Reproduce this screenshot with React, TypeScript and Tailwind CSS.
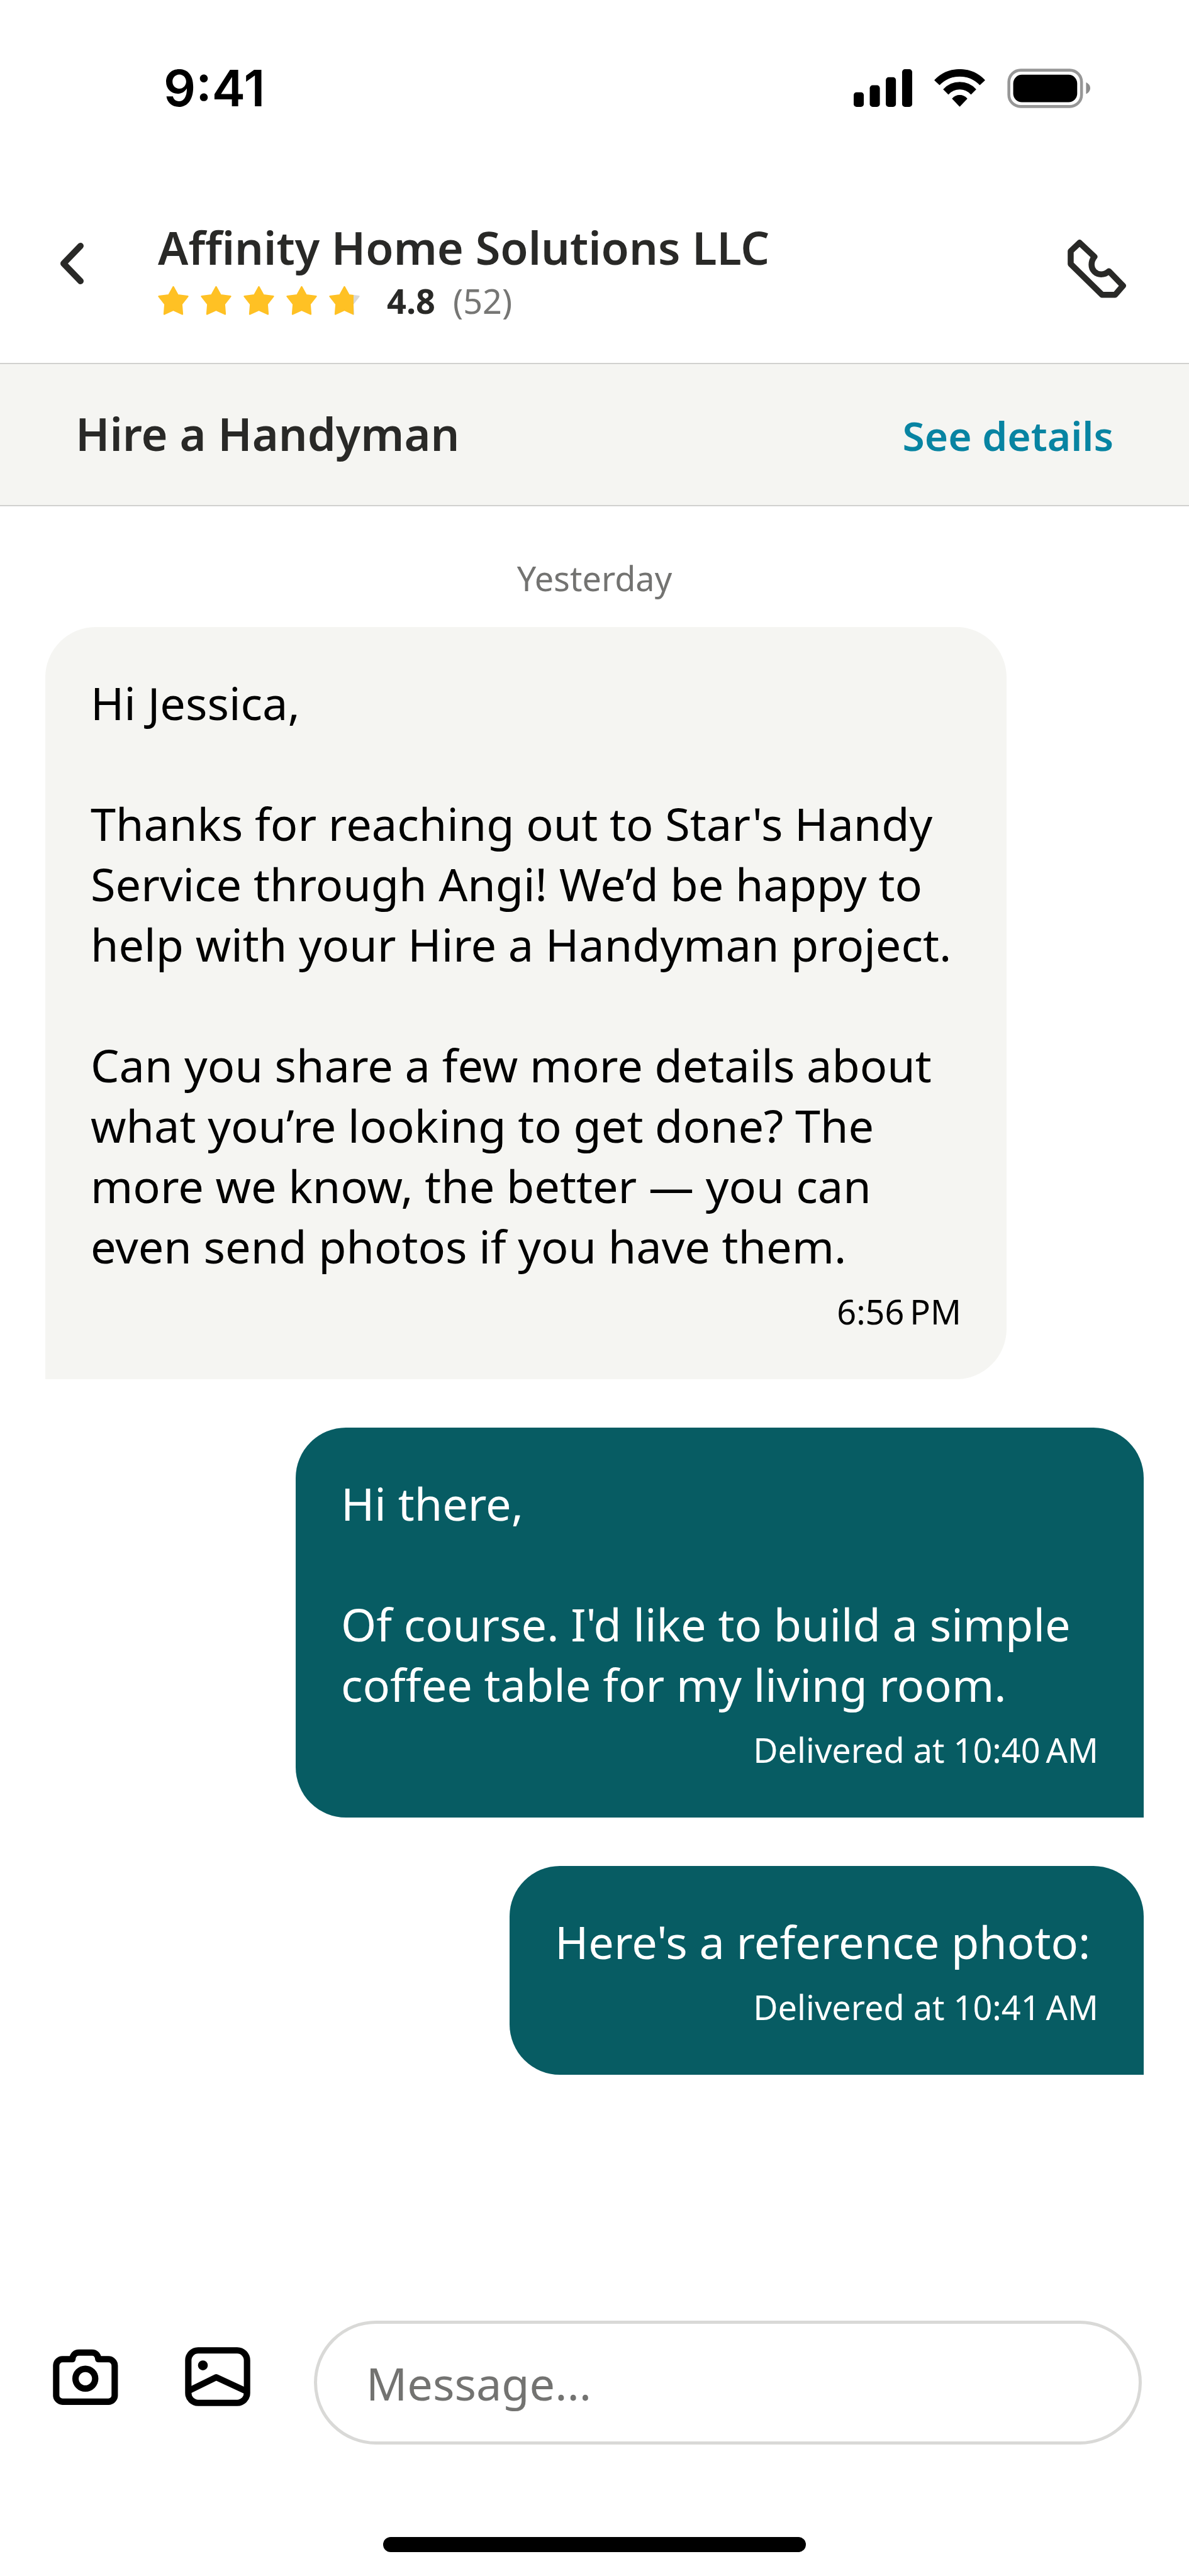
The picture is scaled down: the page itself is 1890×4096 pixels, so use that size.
import { useState } from 'react'

interface Message {
  id: number
  mine: boolean
  text: string
  status: string
  width: string
}

const MESSAGES: Message[] = [
  {
    id: 1,
    mine: false,
    text: "Hi Jessica,\n\nThanks for reaching out to Star's Handy\nService through Angi! We’d be happy to\nhelp with your Hire a Handyman project.\n\nCan you share a few more details about\nwhat you’re looking to get done? The\nmore we know, the better — you can\neven send photos if you have them.",
    status: '6:56\u2009PM',
    width: 'w-[1528px]',
  },
  {
    id: 2,
    mine: true,
    text: "Hi there,\n\nOf course. I'd like to build a simple\ncoffee table for my living room.",
    status: 'Delivered at 10:40\u2009AM',
    width: 'w-[1348px]',
  },
  {
    id: 3,
    mine: true,
    text: "Here's a reference photo:",
    status: 'Delivered at 10:41\u2009AM',
    width: 'w-[1008px]',
  },
]

/* ── Icons ───────────────────────────────────────────────────── */
function SignalIcon() {
  return (
    <svg viewBox="0 0 284 183" className="h-[60px] w-[93px]" aria-hidden="true">
      <rect x="0" y="112" width="49" height="71" rx="14" />
      <rect x="78" y="78" width="49" height="105" rx="14" />
      <rect x="156" y="39" width="49" height="144" rx="14" />
      <rect x="235" y="0" width="49" height="183" rx="14" />
    </svg>
  )
}

function WifiIcon() {
  return (
    <svg viewBox="0 0 248 183" className="h-[60px] w-[81px]" aria-hidden="true">
      <g stroke="#000" strokeWidth="4" strokeLinejoin="round">
        <path d="M3 53A168 168 0 0 1 245 53L222 75A137 137 0 0 0 26 75Z" />
        <path d="M46 98A106 106 0 0 1 202 98L179 121A74 74 0 0 0 69 121Z" />
        <path d="M89 143A46 46 0 0 1 159 143L124 180Z" />
      </g>
    </svg>
  )
}

function BatteryIcon() {
  return (
    <svg viewBox="0 0 402 192" className="h-[63px] w-[132px]" aria-hidden="true">
      <rect x="8" y="8" width="352" height="176" rx="57" fill="none" stroke="#979797" strokeWidth="14" />
      <rect x="29" y="30" width="310" height="133" rx="42" />
      <path d="M382 67C395 73 402 83 402 95C402 107 395 117 382 123Z" fill="#8c8c8c" />
    </svg>
  )
}

function ChevronIcon() {
  return (
    <svg viewBox="0 0 40 68" className="h-[68px] w-10" fill="none" aria-hidden="true">
      <path d="M34 6L7 34L34 62" stroke="#292927" strokeWidth="10" strokeLinecap="round" strokeLinejoin="round" />
    </svg>
  )
}

function PhoneIcon() {
  return (
    <svg viewBox="73 52 283 283" className="size-[93px]" fill="none" aria-hidden="true">
      <path
        d="M131 67L88 108V170L240 319H303L341 275L273 205C260 217 248 220 235 220C210 220 189 200 189 174C189 159 193 147 203 135Z"
        stroke="#292927"
        strokeWidth="29"
        strokeLinejoin="round"
      />
    </svg>
  )
}

function CameraIcon() {
  return (
    <svg viewBox="0 0 318 288" className="h-[94px] w-[104px]" fill="none" aria-hidden="true">
      <path
        d="M48 59H95C96 39 109 27 127 27H190C208 27 220 39 221 59H270A31 31 0 0 1 301 90V235A31 31 0 0 1 270 266H48A31 31 0 0 1 16 235V90A31 31 0 0 1 48 59Z"
        stroke="#000"
        strokeWidth="31"
        strokeLinejoin="round"
      />
      <circle cx="158" cy="154" r="48" stroke="#000" strokeWidth="31" />
    </svg>
  )
}

function PictureIcon() {
  return (
    <svg viewBox="0 0 318 288" className="h-[94px] w-[104px]" fill="none" aria-hidden="true">
      <rect x="16" y="16" width="286" height="256" rx="48" stroke="#000" strokeWidth="31" />
      <path d="M24 210L152 147L294 213" stroke="#000" strokeWidth="31" strokeLinejoin="round" />
      <circle cx="87" cy="89" r="24" fill="#000" />
    </svg>
  )
}

function Star({ fill }: { fill: number }) {
  const id = `star-${Math.round(fill * 100)}`

  return (
    <svg viewBox="0 0 150 141" className="h-[46px] w-[49px]" aria-hidden="true">
      <defs>
        <linearGradient id={id} gradientUnits="userSpaceOnUse" x1="0" y1="0" x2="150" y2="0">
          <stop offset={fill} stopColor="#ffc124" />
          <stop offset={fill} stopColor="#d9d9d6" />
        </linearGradient>
      </defs>
      <path
        d="M75 4L97 44L145 50L115 88L119 136L75 116L31 136L35 88L5 50L53 44Z"
        fill={`url(#${id})`}
        stroke={`url(#${id})`}
        strokeWidth="8"
        strokeLinejoin="round"
      />
    </svg>
  )
}

/* ── Sections ────────────────────────────────────────────────── */
function StatusBar() {
  return (
    <div className="flex h-[280px] items-center justify-between pr-[157px] pl-[260px]">
      <span className="font-[Inter,sans-serif] text-[80px] font-semibold text-black">9:41</span>
      <div className="flex items-center gap-[35px]">
        <SignalIcon />
        <WifiIcon />
        <BatteryIcon />
      </div>
    </div>
  )
}

function Header() {
  return (
    <header className="flex items-center pt-[68px] pr-[100px] pb-[63px] pl-[94px] text-[#292927]">
      <button type="button" aria-label="Back" className="pb-6">
        <ChevronIcon />
      </button>
      <div className="ml-[117px] flex-1">
        <h1 className="text-[72px] leading-[90px] font-semibold">Affinity Home Solutions LLC</h1>
        <div className="mt-1 flex items-center text-[54px] leading-[72px]">
          <div className="flex gap-[19px]" role="img" aria-label="4.8 out of 5 stars">
            {[1, 1, 1, 1, 0.8].map((fill, i) => (
              <Star key={i} fill={fill} />
            ))}
          </div>
          <span className="ml-[43px] font-bold">4.8</span>
          <span className="ml-7 text-[#767674]">(52)</span>
        </div>
      </div>
      <button type="button" aria-label="Call" className="pb-2">
        <PhoneIcon />
      </button>
    </header>
  )
}

function ProjectBar() {
  return (
    <div className="flex items-baseline justify-between border-y-2 border-[#d1d1cf] bg-[#f5f5f2] px-[120px] py-[62px]">
      <h2 className="text-[72px] leading-[96px] font-semibold text-[#292927]">Hire a Handyman</h2>
      <a href="#details" className="text-[64px] leading-[96px] font-semibold text-[#0884a2]">
        See details
      </a>
    </div>
  )
}

function Bubble({ message }: { message: Message }) {
  const side = message.mine
    ? 'self-end rounded-br-none bg-[#075c63] text-white'
    : 'self-start rounded-bl-none bg-[#f5f5f2] text-black'

  return (
    <li className={`max-w-full rounded-[80px] p-[72px] ${message.width} ${side}`}>
      <p className="text-[72px] leading-[96px] whitespace-pre-line">{message.text}</p>
      <p className="mt-5 text-right text-[54px] leading-[72px]">{message.status}</p>
    </li>
  )
}

function Composer() {
  const [draft, setDraft] = useState('')

  return (
    <form className="flex items-center pr-[75px] pl-[84px]" onSubmit={(e) => e.preventDefault()}>
      <div className="flex gap-[106px] pb-5">
        <button type="button" aria-label="Take a photo">
          <CameraIcon />
        </button>
        <button type="button" aria-label="Attach a picture">
          <PictureIcon />
        </button>
      </div>
      <input
        type="text"
        aria-label="Message"
        placeholder="Message..."
        value={draft}
        onChange={(e) => setDraft(e.target.value)}
        className="ml-[101px] h-[197px] min-w-0 flex-1 rounded-full border-5 border-[#d9d9d7] px-[78px] text-[72px] outline-none placeholder:text-[#737371]"
      />
    </form>
  )
}

export default function App() {
  return (
    <div className="flex min-h-screen flex-col bg-white font-['Noto_Sans',sans-serif]">
      <StatusBar />
      <Header />
      <ProjectBar />
      <main className="flex-1 px-[72px] pt-[78px]">
        <p className="text-center text-[54px] leading-[72px] text-[#737371]">Yesterday</p>
        <ul className="mt-[42px] flex flex-col gap-[77px]">
          {MESSAGES.map((message) => (
            <Bubble key={message.id} message={message} />
          ))}
        </ul>
      </main>
      <footer className="pb-[38px]">
        <Composer />
        <div className="mx-auto mt-[147px] h-6 w-[672px] rounded-full bg-black" />
      </footer>
    </div>
  )
}
